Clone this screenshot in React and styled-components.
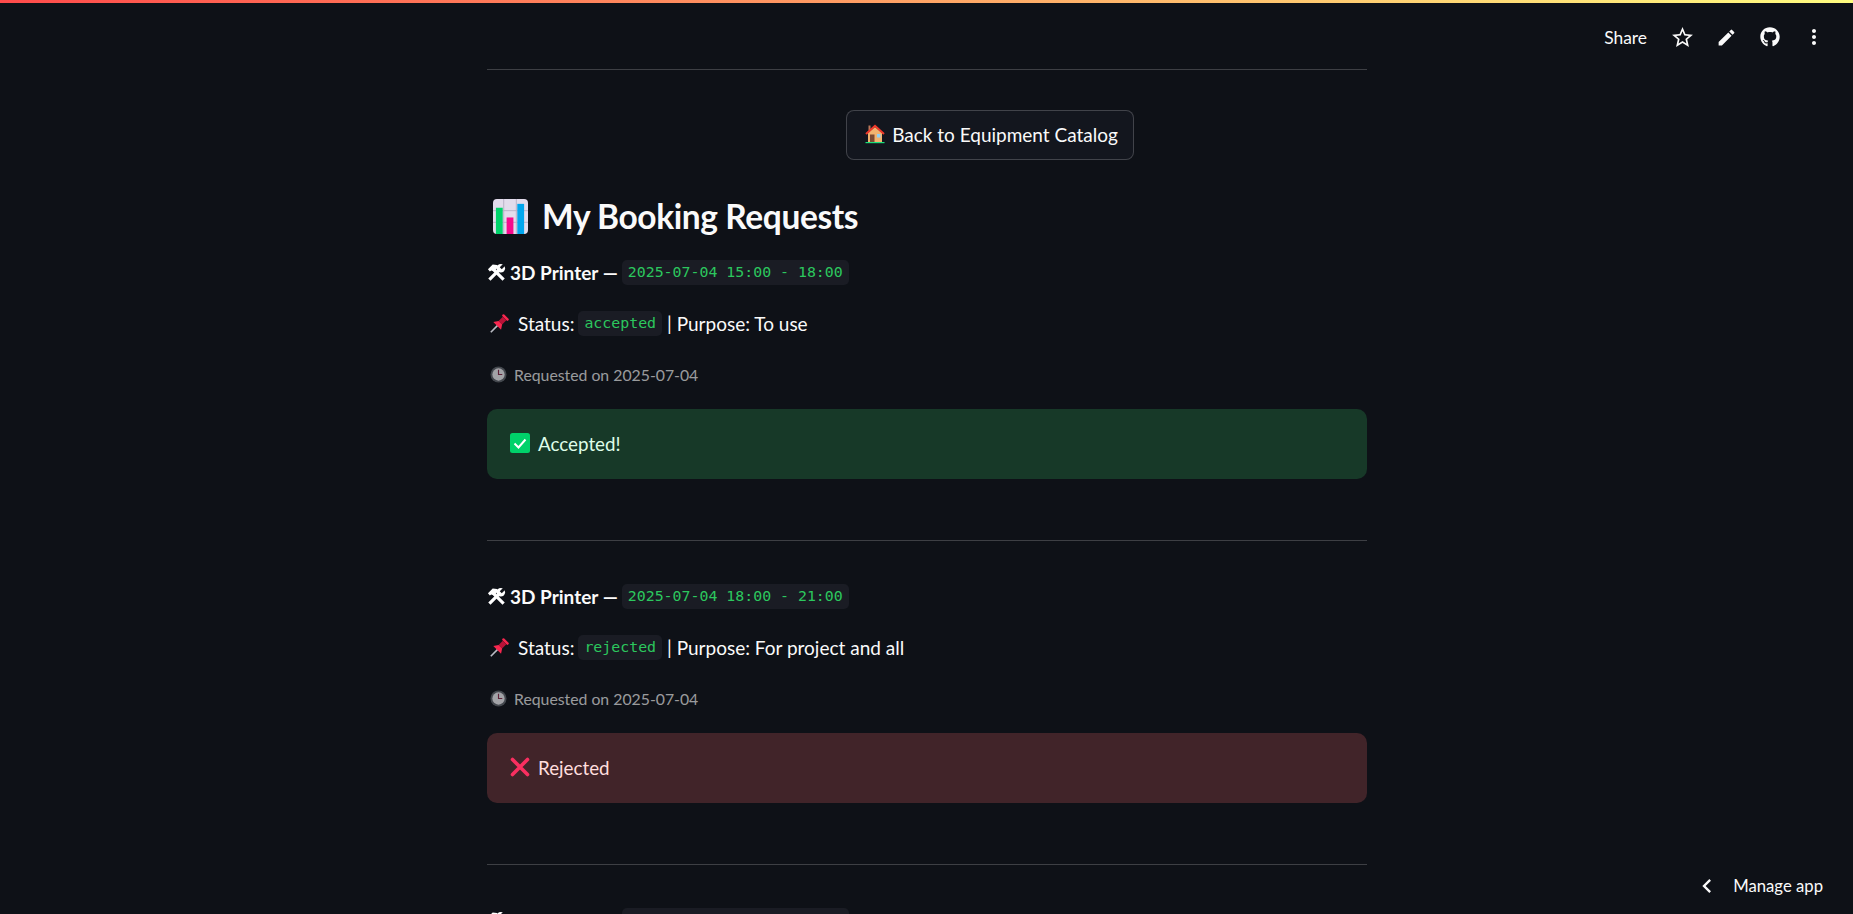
import styled, { createGlobalStyle } from 'styled-components';
import { FaGithub } from 'react-icons/fa';
import { MdEdit, MdMoreVert, MdStarBorder, MdChevronLeft } from 'react-icons/md';

const GlobalStyle = createGlobalStyle`
	html, body {
		margin: 0;
		background: #0e1117;
		overflow: hidden;
	}
	* { box-sizing: border-box; }
`;

const bookings = [
	{ slot: '2025-07-04 15:00 - 18:00', status: 'accepted', purpose: 'To use', requested: '2025-07-04' },
	{ slot: '2025-07-04 18:00 - 21:00', status: 'rejected', purpose: 'For project and all', requested: '2025-07-04' },
	{ slot: '2025-07-04 21:00 - 23:00', status: 'pending', purpose: 'To use', requested: '2025-07-04' },
];

const HouseIcon = () => (
	<Emoji viewBox='0 0 20 20' $size={20}>
		<rect x='3.5' y='1.5' width='2' height='5' fill='#b9785a' />
		<path d='M3 9 10 3l7 6v9H3z' fill='#f2b36f' />
		<path d='M1 10 10 1.8 19 10' fill='none' stroke='#f0392b' strokeWidth='2' />
		<rect x='5' y='10.5' width='4.5' height='7.5' fill='#7c4a32' />
		<rect x='12' y='10' width='3.5' height='3.5' fill='#8fd0f5' />
		<rect x='0.5' y='18' width='19' height='1.2' fill='#19e07b' />
	</Emoji>
);

const ChartIcon = () => (
	<Emoji viewBox='0 0 36 36' $size={35}>
		<rect width='36' height='36' rx='4' fill='#e2dcec' />
		<path d='M11 0v36M24 0v36M0 12h36M0 24h36' stroke='#b9b2c6' strokeWidth='1' />
		<rect x='3' y='9' width='7' height='27' fill='#00d26a' />
		<rect x='14' y='19' width='7' height='17' fill='#f70a8d' />
		<rect x='25' y='5' width='7' height='31' fill='#00a6ed' />
	</Emoji>
);

const ToolsIcon = () => (
	<Emoji viewBox='0 0 20 20' $size={19}>
		<path d='M1 6.500 6 1.500l4.500.5 1.500 2-4.500 5-3-1-1.500 1z' fill='#fff' />
		<path d='M7 7 17.500 17.500' stroke='#fff' strokeWidth='3.400' />
		<path d='M2.500 17.500 12 8' stroke='#fff' strokeWidth='3.400' />
		<circle cx='14.500' cy='5.500' r='4.500' fill='#fff' />
		<path d='M14.500 5.500 19.500 .5' stroke='#0e1117' strokeWidth='3' />
	</Emoji>
);

const PinIcon = () => (
	<Emoji viewBox='0 0 20 20' $size={20} $gapRight={5}>
		<g transform='rotate(45 11 9)'>
			<path d='M11 12v10' stroke='#b9bcc4' strokeWidth='1.600' />
			<rect x='7' y='0' width='8' height='2.500' rx='1' fill='#f8274f' />
			<rect x='8.500' y='2.500' width='5' height='6' fill='#b81237' />
			<path d='M5.500 13h11l-3-4.500h-5z' fill='#f8274f' />
		</g>
	</Emoji>
);

const ClockIcon = () => (
	<Emoji viewBox='0 0 18 18' $size={17} $dim>
		<circle cx='9' cy='9' r='8.500' fill='#555a60' />
		<circle cx='9' cy='9' r='6.500' fill='#d4d4d8' />
		<path d='M9 4v5h4' fill='none' stroke='#7a2a45' strokeWidth='1.200' />
	</Emoji>
);

const CheckIcon = () => (
	<Emoji viewBox='0 0 20 20' $size={20}>
		<rect width='20' height='20' rx='2.500' fill='#00d26a' />
		<path d='M4.500 10.500 8.500 14.500 15.500 6.500' fill='none' stroke='#fff' strokeWidth='2' />
	</Emoji>
);

const CrossIcon = () => (
	<Emoji viewBox='0 0 20 20' $size={20}>
		<path d='M2.500 2.500 17.500 17.500M17.500 2.500 2.500 17.500' fill='none' stroke='#f92f60' strokeWidth='3.600' strokeLinecap='round' />
	</Emoji>
);

const Booking = ({ slot, status, purpose, requested }) => (
	<Entry>
		<SlotLine>
			<ToolsIcon />
			<Strong>3D Printer —</Strong>
			<Code>{slot}</Code>
		</SlotLine>
		<StatusLine>
			<PinIcon />
			<span>Status:</span>
			<Code>{status}</Code>
			<span>| Purpose: {purpose}</span>
		</StatusLine>
		<Caption>
			<ClockIcon />
			<span>Requested on {requested}</span>
		</Caption>
		{status !== 'pending' && (
			<Alert $kind={status}>
				{status === 'accepted' ? <CheckIcon /> : <CrossIcon />}
				<span>{status === 'accepted' ? 'Accepted!' : 'Rejected'}</span>
			</Alert>
		)}
		<Divider />
	</Entry>
);

const App = () => (
	<Page>
		<GlobalStyle />
		<TopBar />
		<Toolbar>
			<ToolbarText>Share</ToolbarText>
			<ToolbarIcon><MdStarBorder size={25} /></ToolbarIcon>
			<ToolbarIcon><MdEdit size={21} /></ToolbarIcon>
			<ToolbarIcon><FaGithub size={20} /></ToolbarIcon>
			<ToolbarIcon><MdMoreVert size={24} /></ToolbarIcon>
		</Toolbar>
		<Main>
			<Divider $top />
			<ButtonRow>
				<BackButton>
					<HouseIcon />
					Back to Equipment Catalog
				</BackButton>
			</ButtonRow>
			<Title>
				<ChartIcon />
				My Booking Requests
			</Title>
			{bookings.map((booking) => (
				<Booking key={booking.slot} {...booking} />
			))}
		</Main>
		<ManageApp>
			<MdChevronLeft size={28} />
			<span>Manage app</span>
		</ManageApp>
	</Page>
);

const Page = styled.div`
	position: relative;
	height: 914px;
	overflow: hidden;
	background: #0e1117;
	color: #fafafa;
	font-family: 'Lato', 'Noto Sans', sans-serif;
	font-size: 19px;
`;

const TopBar = styled.div`
	height: 3px;
	background: linear-gradient(90deg, #ff4b4b, #fffd80);
`;

const Toolbar = styled.div`
	position: absolute;
	top: 21px;
	right: 20px;
	display: flex;
	align-items: center;
	gap: 6px;
`;

const ToolbarText = styled.span`
	font-size: 17.400px;
	margin-right: 10px;
`;

const ToolbarIcon = styled.span`
	display: flex;
	align-items: center;
	justify-content: center;
	width: 38px;
	height: 32px;
`;

const Main = styled.main`
	width: 880px;
	margin-left: 487px;
	padding-top: 66px;
`;

const Divider = styled.hr`
	height: 1px;
	border: 0;
	margin: ${(props) => (props.$top ? '0' : '61px 0 20px')};
	background: rgba(250, 250, 250, 0.2);
`;

const ButtonRow = styled.div`
	display: flex;
	justify-content: center;
	padding: 40px 0 0 126px;
`;

const BackButton = styled.button`
	display: flex;
	align-items: center;
	gap: 7px;
	height: 50px;
	padding: 0 15px 2px 18px;
	border: 1px solid rgba(250, 250, 250, 0.2);
	border-radius: 8px;
	background: #13161e;
	color: #fafafa;
	font: inherit;
`;

const Title = styled.h1`
	display: flex;
	align-items: center;
	gap: 14px;
	height: 44px;
	margin: 34px 0 -1px 6px;
	font-size: 33.500px;
	font-weight: 700;
	letter-spacing: -0.4px;
`;

const Entry = styled.section`
	padding-top: 22px;
`;

const SlotLine = styled.p`
	display: flex;
	align-items: center;
	gap: 4px;
	height: 27px;
	margin: 0 0 24px;
`;

const StatusLine = styled.p`
	display: flex;
	align-items: center;
	gap: 4px;
	height: 27px;
	margin: 0 0 25px;
	padding-left: 2px;
`;

const Strong = styled.strong`
	font-weight: 700;
`;

const Code = styled.code`
	margin-right: 1px;
	padding: 3px 6px;
	border-radius: 5px;
	background: #1a1c24;
	color: #2cc75e;
	font-family: 'DejaVu Sans Mono', 'Liberation Mono', monospace;
	font-size: 14.880px;
	line-height: 19px;
`;

const Caption = styled.p`
	display: flex;
	align-items: center;
	gap: 7px;
	height: 24px;
	margin: 0 0 23px;
	padding-left: 3px;
	color: rgba(250, 250, 250, 0.6);
	font-size: 15.800px;
`;

const Alert = styled.div`
	display: flex;
	align-items: center;
	gap: 8px;
	height: 70px;
	padding: 0 23px 2px;
	border-radius: 10px;
	font-size: 18.800px;
	background: ${(props) => (props.$kind === 'accepted' ? '#173928' : '#412429')};
	color: ${(props) => (props.$kind === 'accepted' ? '#dffde9' : '#ffdede')};
`;

const Emoji = styled.svg`
	flex: none;
	width: ${(props) => props.$size}px;
	height: ${(props) => props.$size}px;
	margin-right: ${(props) => props.$gapRight || 0}px;
	opacity: ${(props) => (props.$dim ? 0.75 : 1)};
`;

const ManageApp = styled.div`
	position: absolute;
	right: 30px;
	bottom: 14px;
	display: flex;
	align-items: center;
	gap: 12px;
	font-size: 16.700px;
`;

export default App;
